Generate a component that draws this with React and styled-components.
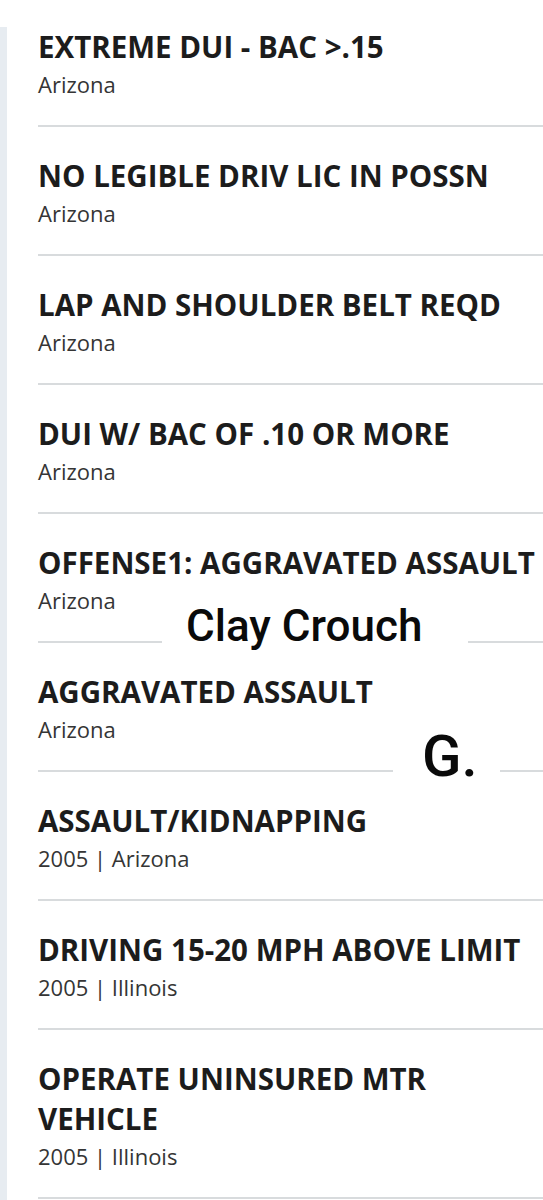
import React from 'react';
import styled, { createGlobalStyle } from 'styled-components';

const GlobalStyle = createGlobalStyle`
  html, body {
    margin: 0;
    padding: 0;
    background: #ffffff;
  }
  body {
    font-family: "Open Sans", "Liberation Sans", sans-serif;
  }
`;

// データ
const offenses = [
  { title: 'EXTREME DUI - BAC >.15', sub: 'Arizona' },
  { title: 'NO LEGIBLE DRIV LIC IN POSSN', sub: 'Arizona' },
  { title: 'LAP AND SHOULDER BELT REQD', sub: 'Arizona' },
  { title: 'DUI W/ BAC OF .10 OR MORE', sub: 'Arizona' },
  { title: 'OFFENSE1: AGGRAVATED ASSAULT', sub: 'Arizona' },
  { title: 'AGGRAVATED ASSAULT', sub: 'Arizona' },
  { title: 'ASSAULT/KIDNAPPING', sub: '2005 | Arizona' },
  { title: 'DRIVING 15-20 MPH ABOVE LIMIT', sub: '2005 | Illinois' },
  { title: 'OPERATE UNINSURED MTR VEHICLE', sub: '2005 | Illinois' },
];

// レイアウト
const Page = styled.div`
  position: relative;
  width: 543px;
  height: 1200px;
  overflow: hidden;
  display: flex;
`;
const SideRail = styled.div`
  width: 7px;
  margin-top: 27px;
  background: #e7ecf1;
  flex-shrink: 0;
`;
const List = styled.ul`
  list-style: none;
  margin: 0;
  padding: 0 0 0 31px;
  flex: 1;
`;
const Row = styled.li`
  padding: 29px 0 27px;
  border-bottom: 2px solid #d8dbdd;
  &:first-child {
    padding-top: 27px;
  }
`;
const Title = styled.div`
  font-size: 29.5px;
  line-height: 40px;
  font-weight: 700;
  color: #1c1c1c;
`;
const Sub = styled.div`
  margin-top: 3px;
  font-size: 22px;
  line-height: 28px;
  color: #353535;
`;

// 上に重ねた書き込み
const Note = styled.div`
  position: absolute;
  top: ${(p) => p.top}px;
  left: ${(p) => p.left}px;
  width: ${(p) => p.width}px;
  padding-left: ${(p) => p.indent}px;
  box-sizing: border-box;
  background: #ffffff;
  font-family: Roboto, "Liberation Sans", sans-serif;
  font-size: ${(p) => p.size}px;
  line-height: ${(p) => p.size}px;
  font-weight: 500;
  color: #0a0a0a;
  white-space: nowrap;
`;

const App = () => (
  <>
    <GlobalStyle />
    <Page>
      <SideRail />
      <List>
        {offenses.map((rec) => (
          <Row key={rec.title}>
            <Title>{rec.title}</Title>
            <Sub>{rec.sub}</Sub>
          </Row>
        ))}
      </List>
      <Note top={604} left={162} width={306} indent={24} size={44}>Clay Crouch</Note>
      <Note top={727} left={393} width={107} indent={29} size={58}>G.</Note>
    </Page>
  </>
);

export default App;
